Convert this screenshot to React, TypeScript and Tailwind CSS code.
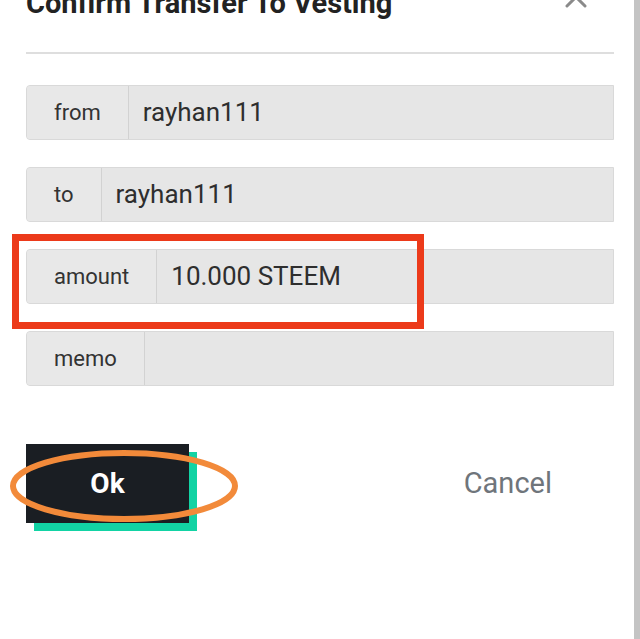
const FIELDS = [
  { label: "from", value: "rayhan111" },
  { label: "to", value: "rayhan111" },
  { label: "amount", value: "10.000 STEEM" },
  { label: "memo", value: "" },
];

function Field({ label, value }: { label: string; value: string }) {
  return (
    <div className="flex h-[55px] w-full overflow-hidden rounded-l-[4px] border border-[#d9d9d9] bg-[#e6e6e6]">
      <div className="flex items-center border-r border-[#d2d2d2] bg-[#e8e8e8] px-[27px] text-[22px] text-[#333]">
        {label}
      </div>
      <div className="flex flex-1 items-center px-[14px] text-[26px] text-[#2e2e2e]">{value}</div>
    </div>
  );
}

export default function App() {
  return (
    <div className="relative h-[639px] w-[640px] overflow-hidden bg-white font-['Roboto',sans-serif]">
      {/* scrollbar track */}
      <div className="absolute right-0 top-0 h-full w-[6px] bg-[#c4c4c4]" />

      <div className="flex flex-col px-[26px]">
        <div className="flex h-[54px] items-start justify-between border-b-2 border-[#dedede]">
          <h2 className="-mt-[13px] whitespace-nowrap text-[29px] font-bold leading-[32px] text-[#222]">
            Confirm Transfer To Vesting
          </h2>
          <svg className="-mt-[15px] mr-[26px]" width="24" height="24" viewBox="0 0 24 24">
            <path d="M3 3 L21 21 M21 3 L3 21" stroke="#8a8a8a" strokeWidth="3" strokeLinecap="round" />
          </svg>
        </div>

        <div className="mt-[31px] flex flex-col gap-[27px]">
          {FIELDS.map((f) => (
            <Field key={f.label} label={f.label} value={f.value} />
          ))}
        </div>

        <div className="mt-[58px] flex items-center">
          <div className="relative">
            <div className="absolute left-[8px] top-[8px] h-[79px] w-[163px] bg-[#12d3a4]" />
            <button className="relative flex h-[79px] w-[163px] items-center justify-center bg-[#1a1e23] text-[28px] font-bold text-white">
              Ok
            </button>
          </div>
          <span className="ml-auto mr-[62px] text-[29px] text-[#6f757b]">Cancel</span>
        </div>
      </div>

      {/* highlight marks */}
      <div className="absolute left-[12px] top-[234px] h-[95px] w-[412px] border-[7px] border-[#ec3a1a]" />
      <svg className="absolute left-[6px] top-[447px]" width="236" height="78" viewBox="0 0 236 78">
        <ellipse cx="118" cy="39" rx="111" ry="33" fill="none" stroke="#f28a3a" strokeWidth="6" />
      </svg>
    </div>
  );
}
